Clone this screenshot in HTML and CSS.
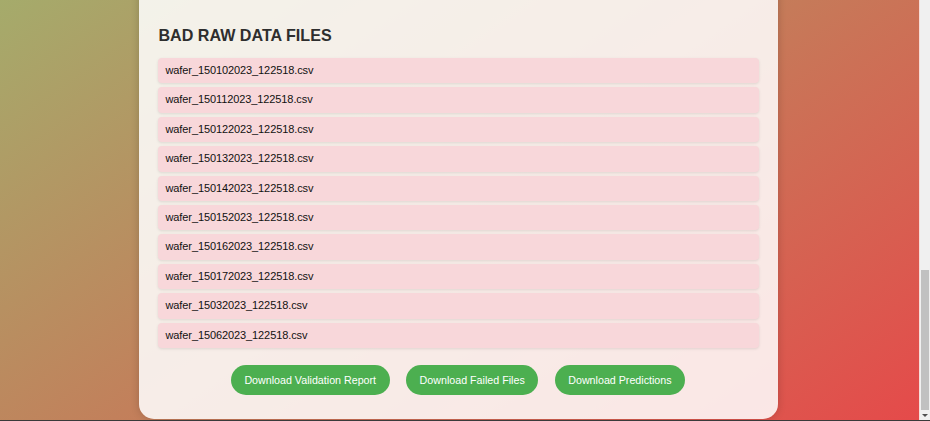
FILE: index.html
```html
<!DOCTYPE html>
<html lang="en">
<head>
<meta charset="utf-8">
<title>Bad Raw Data Files</title>
<link rel="stylesheet" href="styles.css">
</head>
<body>
  <div class="window">
    <div class="viewport">
      <main class="card">
        <h2 class="title">BAD RAW DATA FILES</h2>
        <ul class="file-list">
          <li class="file">wafer_150102023_122518.csv</li>
          <li class="file">wafer_150112023_122518.csv</li>
          <li class="file">wafer_150122023_122518.csv</li>
          <li class="file">wafer_150132023_122518.csv</li>
          <li class="file">wafer_150142023_122518.csv</li>
          <li class="file">wafer_150152023_122518.csv</li>
          <li class="file">wafer_150162023_122518.csv</li>
          <li class="file">wafer_150172023_122518.csv</li>
          <li class="file">wafer_15032023_122518.csv</li>
          <li class="file">wafer_15062023_122518.csv</li>
        </ul>
        <div class="actions">
          <a class="btn" href="#">Download Validation Report</a>
          <a class="btn" href="#">Download Failed Files</a>
          <a class="btn" href="#">Download Predictions</a>
        </div>
      </main>
    </div>
    <div class="scrollbar">
      <div class="track"></div>
      <div class="thumb"></div>
      <div class="arrow"></div>
    </div>
  </div>
  <div class="frame-bottom"></div>
</body>
</html>
```

FILE: styles.css
```css
html, body {
  margin: 0;
  padding: 0;
  height: 421px;
  overflow: hidden;
  font-family: "Liberation Sans", Arial, sans-serif;
}

.window {
  display: flex;
  height: 420px;
}

.viewport {
  flex: 1;
  display: flex;
  justify-content: center;
  align-items: flex-end;
  padding-bottom: 1px;
  overflow: hidden;
  background: linear-gradient(145deg, #a5ab6b 0%, #c47d5a 50%, #e54a4a 100%);
}

.card {
  width: 639px;
  box-sizing: border-box;
  padding: 60px 19px 24px 19px;
  margin-right: 3px;
  background: rgba(255, 255, 255, 0.86);
  border-radius: 0 0 15px 15px;
  box-shadow: 0 0 8px rgba(0, 0, 0, 0.18);
  flex-shrink: 0;
}

.title {
  margin: 0 0 14px 1px;
  font-size: 16.1px;
  line-height: 18px;
  font-weight: bold;
  color: #2e2e2e;
}

.file-list {
  list-style: none;
  margin: 0;
  padding: 0;
  display: flex;
  flex-direction: column;
  gap: 3.9px;
}

.file {
  background: #f8d7da;
  border-radius: 4px;
  padding: 5px 8px;
  font-size: 11px;
  letter-spacing: -0.1px;
  line-height: 15.5px;
  color: #111;
  box-shadow: 0 1px 3px rgba(0, 0, 0, 0.1);
}

.actions {
  display: flex;
  justify-content: center;
  gap: 16.5px;
  margin-top: 17px;
}

.btn {
  display: flex;
  align-items: center;
  height: 30px;
  padding: 0 13.5px;
  border-radius: 15px;
  background: #4caf50;
  color: #fff;
  text-decoration: none;
  font-size: 10.7px;
}

.scrollbar {
  width: 10px;
  display: flex;
  flex-direction: column;
  background: #f0f0f0;
  border-left: 1px solid #f6dcd8;
}

.track {
  height: 270px;
}

.thumb {
  height: 140px;
  margin: 0 1px;
  background: #c1c1c1;
}

.arrow {
  flex: 1;
  display: flex;
  justify-content: center;
  align-items: center;
}

.arrow::before {
  content: "";
  border-left: 3px solid transparent;
  border-right: 3px solid transparent;
  border-top: 3px solid #505050;
}

.frame-bottom {
  height: 1px;
  background: #3a3a3a;
}
```
